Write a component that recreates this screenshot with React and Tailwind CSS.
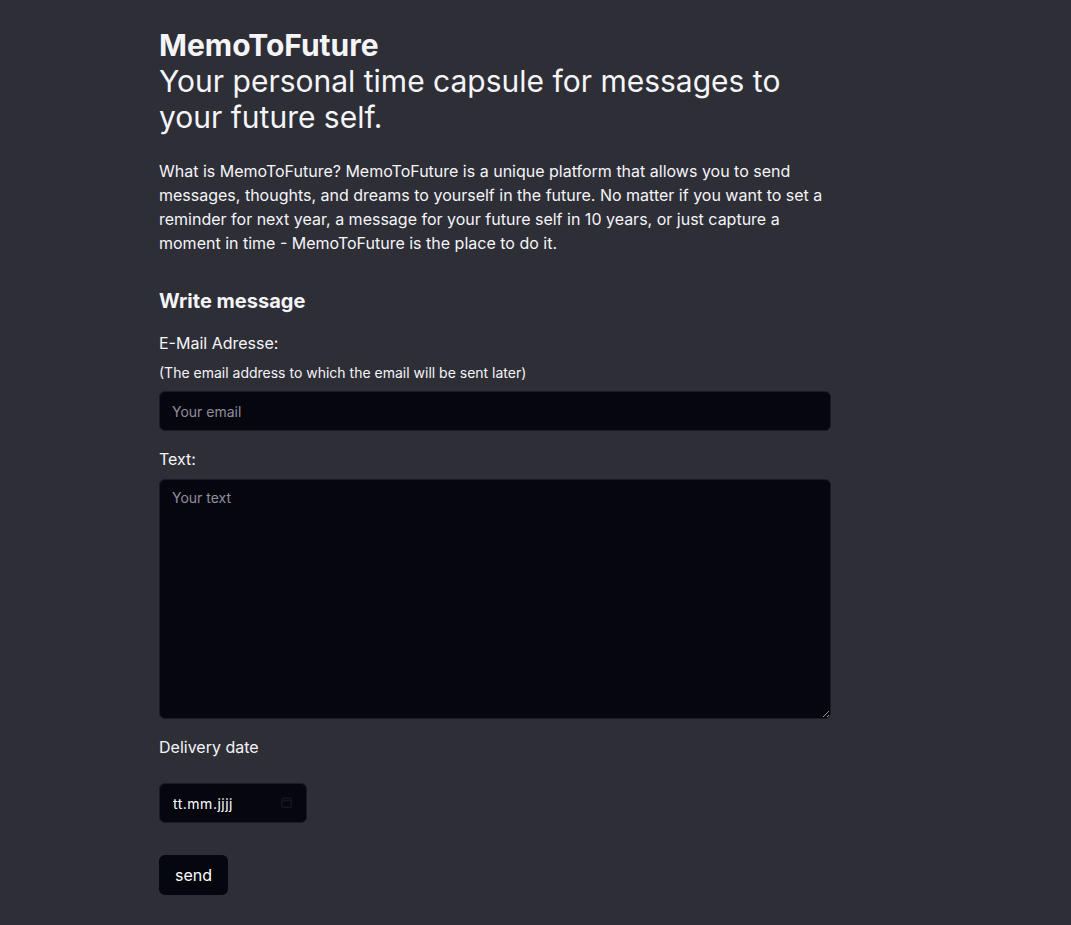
import React, { useState } from "react";

const App = () => {
  const [email, setEmail] = useState("");
  const [text, setText] = useState("");
  const [date, setDate] = useState("");

  const onSubmitHandler = (e) => {
    e.preventDefault();
  };

  return (
    <div
      className="min-h-screen bg-[#2e2e37] text-[#f5f5f7]"
      style={{ fontFamily: "Inter, 'Noto Sans', sans-serif" }}
    >
      <div className="w-[672px] ml-[159px] pt-[27px] pb-8">
        <h1 className="text-3xl leading-9">
          <span className="block font-bold">MemoToFuture</span>
          <span className="block">Your personal time capsule for messages to your future self.</span>
        </h1>

        <p className="mt-6 text-base leading-6">
          What is MemoToFuture? MemoToFuture is a unique platform that allows you to send messages,
          thoughts, and dreams to yourself in the future. No matter if you want to set a reminder for
          next year, a message for your future self in 10 years, or just capture a moment in time -
          MemoToFuture is the place to do it.
        </p>

        <form onSubmit={onSubmitHandler} className="mt-8 flex flex-col">
          <h2 className="text-xl font-bold leading-7">Write message</h2>

          <label className="mt-4 text-base leading-6">E-Mail Adresse:</label>
          <p className="mt-2 text-sm leading-5">(The email address to which the email will be sent later)</p>
          <input
            type="email"
            value={email}
            onChange={(e) => setEmail(e.target.value)}
            placeholder="Your email"
            className="mt-2 h-10 w-full rounded-md border border-[#1b1b25] bg-[#06060f] px-3 text-sm text-white placeholder:text-[#8f8f9c] outline-none"
          />

          <label className="mt-4 text-base leading-6">Text:</label>
          <textarea
            value={text}
            onChange={(e) => setText(e.target.value)}
            placeholder="Your text"
            className="mt-2 h-[240px] w-full rounded-md border border-[#1b1b25] bg-[#06060f] px-3 py-2 text-sm text-white placeholder:text-[#8f8f9c] outline-none"
          />

          <label className="mt-4 text-base leading-6">Delivery date</label>
          <div className="relative mt-6 w-[148px]">
            <input
              type="text"
              value={date}
              onChange={(e) => setDate(e.target.value)}
              placeholder="tt.mm.jjjj"
              className="h-10 w-full rounded-md border border-[#1b1b25] bg-[#06060f] pl-[13px] pr-8 text-sm tracking-[0.5px] text-white placeholder:text-white outline-none"
            />
            {/* calendar picker indicator */}
            <svg
              className="pointer-events-none absolute right-[15px] top-[14px]"
              width="11"
              height="11"
              viewBox="0 0 11 11"
              fill="none"
            >
              <rect x="0.75" y="1.25" width="9.5" height="9" rx="1.5" stroke="#15151e" strokeWidth="1.5" />
              <line x1="1" y1="3.5" x2="10" y2="3.5" stroke="#15151e" strokeWidth="1.5" />
            </svg>
          </div>

          <div className="mt-8">
            <button className="h-10 rounded-md bg-[#06060f] px-4 text-base text-white">send</button>
          </div>
        </form>
      </div>
    </div>
  );
};

export default App;
